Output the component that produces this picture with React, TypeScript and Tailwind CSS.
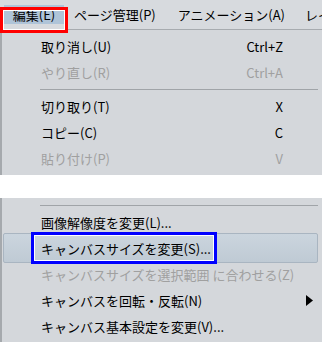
import React from "react";

type Item = { label: string; shortcut?: string; disabled?: boolean; arrow?: boolean; active?: boolean };

function Row({ item }: { item: Item }) {
  return (
    <div
      className={
        "relative flex h-[26px] items-center " +
        (item.disabled ? "text-[#a0a0a0]" : "text-black")
      }
    >
      {item.active && (
        <div className="absolute left-[1px] right-[4px] top-[-2px] bottom-[-2px] rounded-[2px] border border-[#a9b5c1] bg-gradient-to-b from-[#cbd5de] to-[#bfcad4]" />
      )}
      <span className="relative pl-[39px] whitespace-nowrap">{item.label}</span>
      {item.shortcut && (
        <span className="relative ml-auto mr-[39px] whitespace-nowrap">{item.shortcut}</span>
      )}
      {item.arrow && (
        <svg className="relative ml-auto mr-[9px]" width="7" height="11" viewBox="0 0 7 11">
          <path d="M0 0 L7 5.5 L0 11 Z" fill="#000" />
        </svg>
      )}
    </div>
  );
}

function Sep() {
  return (
    <div className="flex h-[8px] items-center pl-[38px] pr-[4px]">
      <div className="h-[1px] w-full bg-[#a0a4a8]" />
    </div>
  );
}

export default function App() {
  const top1: Item[] = [
    { label: "取り消し(U)", shortcut: "Ctrl+Z" },
    { label: "やり直し(R)", shortcut: "Ctrl+A", disabled: true },
  ];
  const top2: Item[] = [
    { label: "切り取り(T)", shortcut: "X" },
    { label: "コピー(C)", shortcut: "C" },
    { label: "貼り付け(P)", shortcut: "V", disabled: true },
  ];
  const bottom: Item[] = [
    { label: "画像解像度を変更(L)..." },
    { label: "キャンバスサイズを変更(S)...", active: true },
    { label: "キャンバスサイズを選択範囲 に合わせる(Z)", disabled: true },
    { label: "キャンバスを回転・反転(N)", arrow: true },
    { label: "キャンバス基本設定を変更(V)..." },
  ];
  return (
    <div
      className="relative h-[342px] w-[322px] overflow-hidden bg-white text-[13px] leading-none"
      style={{ fontFamily: '"Noto Sans CJK JP", "Noto Sans", sans-serif' }}
    >
      {/* menu bar */}
      <div className="flex h-[30px] items-center overflow-hidden whitespace-nowrap border-b border-[#a7abaf] bg-[#d7dade] text-black">
        <div className="ml-[4px] flex h-[19px] w-[60px] shrink-0 items-center justify-center whitespace-nowrap bg-[#afc4d8]">編集(E)</div>
        <div className="ml-[10px] shrink-0 whitespace-nowrap">ページ管理(P)</div>
        <div className="ml-[22px] shrink-0 whitespace-nowrap">アニメーション(A)</div>
        <div className="ml-[20px] shrink-0 whitespace-nowrap">レイヤー</div>
      </div>

      {/* top dropdown */}
      <div className="h-[145px] border-l-2 border-[#a5a9ad] bg-[#d4d7db] pt-[3px]">
        {top1.map((it) => (
          <Row key={it.label} item={it} />
        ))}
        <Sep />
        {top2.map((it) => (
          <Row key={it.label} item={it} />
        ))}
      </div>

      <div className="h-[23px] bg-white" />

      {/* bottom dropdown */}
      <div className="h-[144px] border-l-2 border-[#a5a9ad] bg-[#d4d7db] pt-[3px]">
        <Sep />
        {bottom.map((it) => (
          <Row key={it.label} item={it} />
        ))}
      </div>

      {/* annotation boxes */}
      <div className="pointer-events-none absolute left-0 top-[7px] h-[26px] w-[68px] border-[3px] border-[#ff0000]">
        <div className="h-full w-full border border-white" />
      </div>
      <div className="pointer-events-none absolute left-[31px] top-[232px] h-[32px] w-[186px] border-[3px] border-[#0000ff]">
        <div className="h-full w-full border border-white" />
      </div>
    </div>
  );
}
